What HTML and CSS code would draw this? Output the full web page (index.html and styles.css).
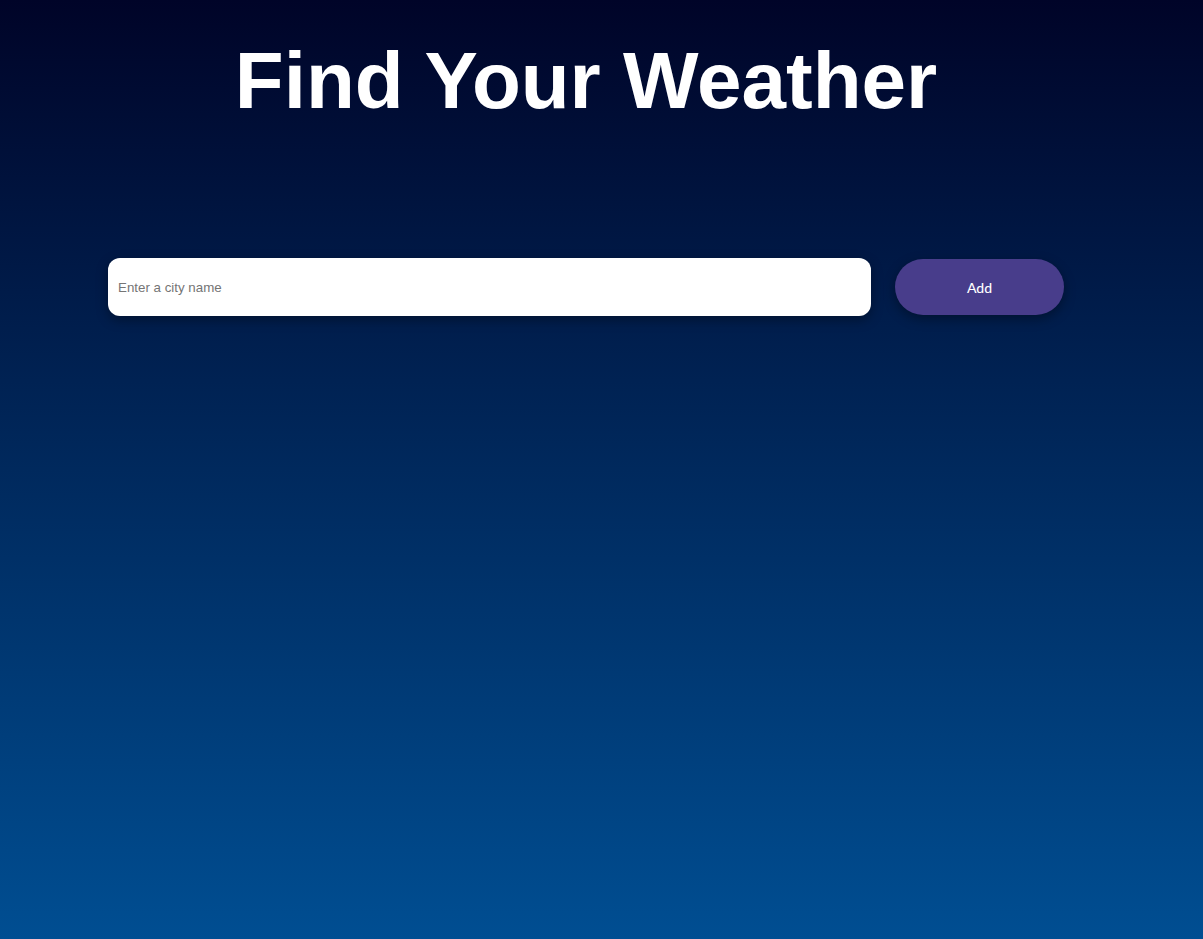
FILE: index.html
```html
<!DOCTYPE html>
<html lang="en">
<head>
<meta charset="utf-8">
<title>Find Your Weather</title>
<link rel="stylesheet" href="styles.css">
</head>
<body>
<main class="page">
  <h1 class="title">Find Your Weather</h1>
  <form class="search" onsubmit="return false">
    <input class="city-input" type="text" placeholder="Enter a city name">
    <button class="add-btn" type="submit">Add</button>
  </form>
</main>
</body>
</html>
```
FILE: styles.css
```css
html, body {
  margin: 0;
  padding: 0;
  height: 100%;
}
body {
  background: linear-gradient(to bottom, #000428, #004e92);
  font-family: "Liberation Sans", Arial, sans-serif;
  min-height: 939px;
}
.page {
  padding: 0 139px 0 108px;
  display: flex;
  flex-direction: column;
}
.title {
  margin: 31px 0 0;
  text-align: center;
  color: #ffffff;
  font-size: 80px;
  font-weight: bold;
  line-height: 100px;
}
.search {
  margin-top: 127px;
  display: flex;
  align-items: center;
  gap: 24px;
}
.city-input {
  flex: 1;
  height: 58px;
  box-sizing: border-box;
  border: none;
  border-radius: 12px;
  background: #ffffff;
  padding: 0 10px;
  font-family: "Liberation Sans", Arial, sans-serif;
  font-size: 13.33px;
  color: #222;
  box-shadow: 0 4px 12px rgba(0, 0, 0, 0.35);
  outline: none;
}
.city-input::placeholder {
  color: #757575;
}
.add-btn {
  width: 169px;
  height: 56px;
  border: none;
  border-radius: 28px;
  background: #483d8b;
  color: #ffffff;
  font-family: "Lato", "Open Sans", sans-serif;
  font-size: 14px;
  font-weight: 500;
  box-shadow: 0 4px 12px rgba(0, 0, 0, 0.35);
  cursor: pointer;
}
```
